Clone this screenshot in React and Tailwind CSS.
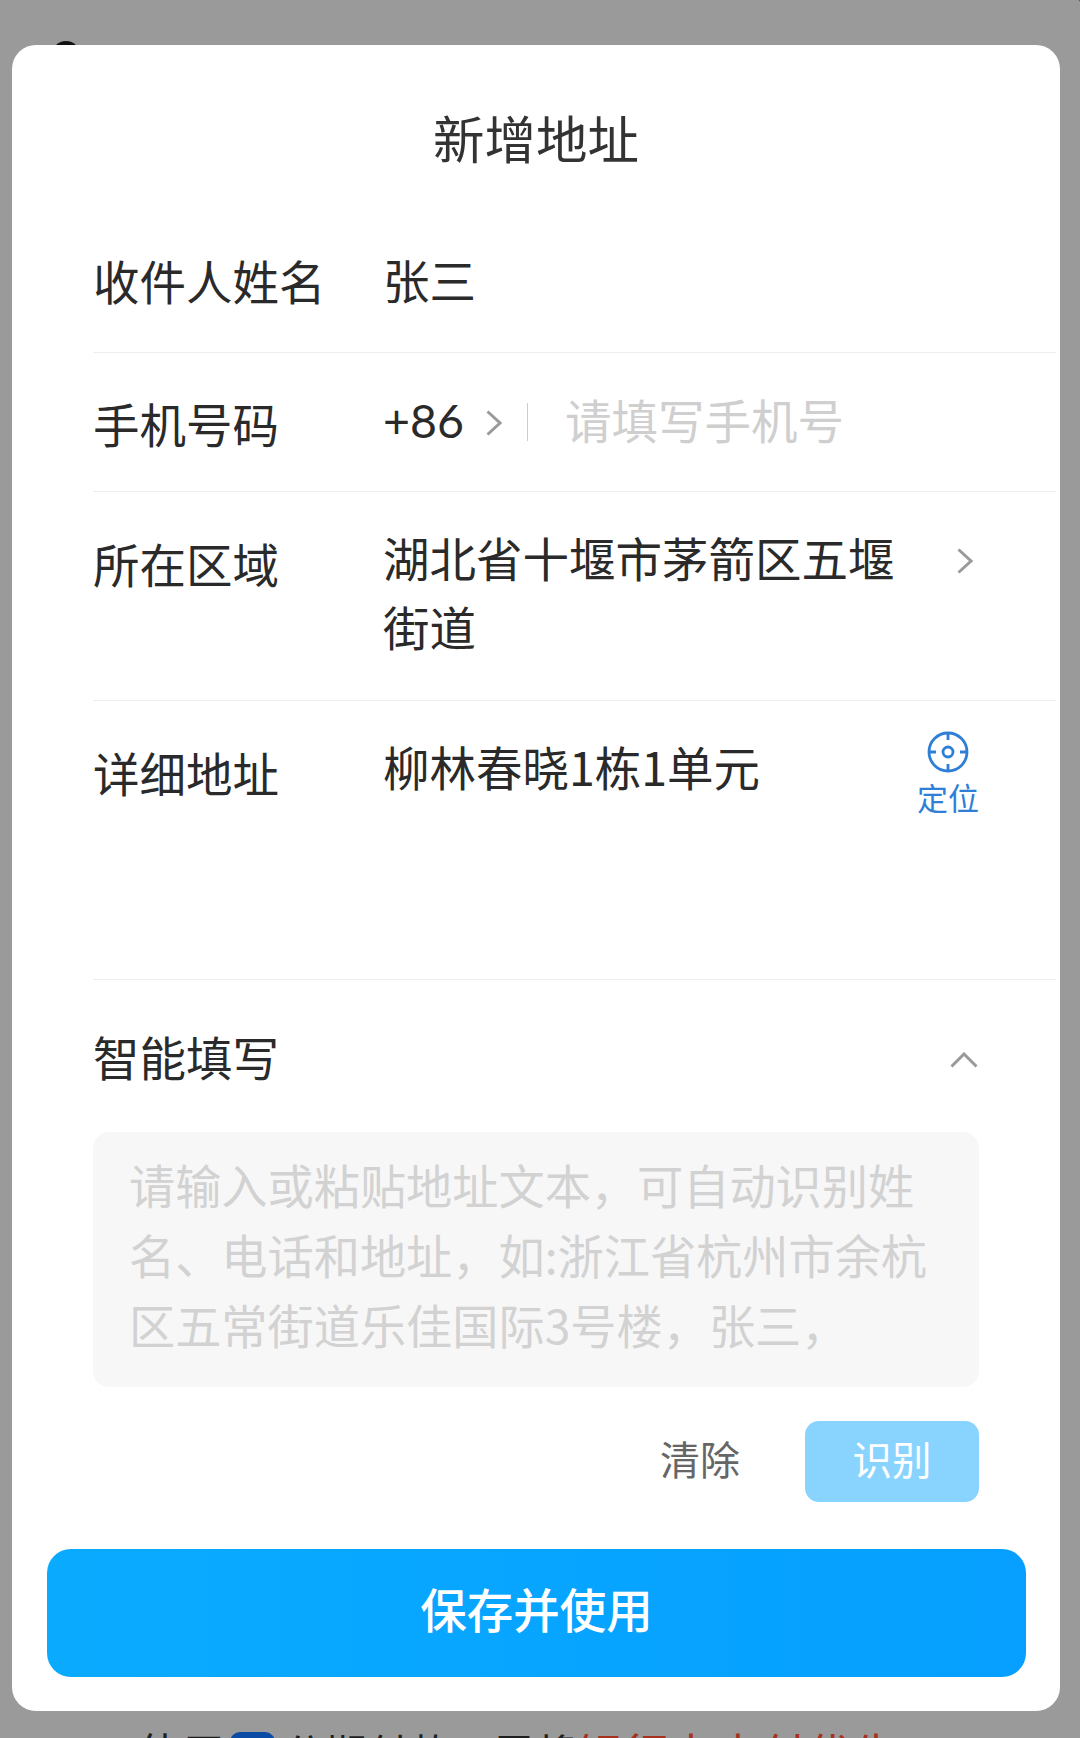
const FONT = "font-['Noto_Sans_CJK_SC','Noto_Sans',sans-serif]";

function Chevron({ className }) {
  return (
    <svg className={className} viewBox="0 0 16 26" fill="none" stroke="#9a9a9a" strokeWidth="3">
      <path d="M1.5 1.5 L14 13 L1.5 24.5" />
    </svg>
  );
}

export default function App() {
  return (
    <div className={`${FONT} relative h-[1738px] w-[1080px] overflow-hidden bg-[#9a9a9a]`}>
      <div className="absolute left-[52px] top-[41px] h-[28px] w-[28px] rounded-full bg-[#111]" />
      <div className="absolute right-[-30px] top-[-30px] h-[36px] w-[36px] rounded-full bg-[#555]" />

      <div className="relative ml-[12px] mt-[45px] h-[1666px] w-[1048px] rounded-[24px] bg-white pl-[81px] pr-[4px]">
        <h1 className="h-[163px] pr-[77px] pt-[62px] text-center text-[51.5px] font-normal leading-[60px] text-[#333]">新增地址</h1>

        <div className="flex h-[145px] border-b border-[#eeeeee] pt-[42px] text-[46.5px] leading-[60px] text-[#2a2a2a]">
          <span className="w-[290px]">收件人姓名</span>
          <span className="-mt-[1px]">张三</span>
        </div>

        <div className="flex h-[139px] items-start border-b border-[#eeeeee] pt-[40px] text-[46.5px] leading-[60px] text-[#2a2a2a]">
          <span className="w-[290px]">手机号码</span>
          <div className="-mt-[3px] flex items-center">
            <span className="w-[103px] font-['Lato','Noto_Sans',sans-serif]">+86</span>
            <Chevron className="mt-[6px] h-[26px] w-[16px]" />
            <div className="ml-[25px] mt-[3px] h-[38px] w-px bg-[#cccccc]" />
            <span className="-mt-[2px] ml-[37px] text-[#cfcfcf]">请填写手机号</span>
          </div>
        </div>

        <div className="flex h-[209px] items-start border-b border-[#eeeeee] pt-[36px] text-[46.5px] leading-[69px] text-[#2a2a2a]">
          <span className="w-[290px]">所在区域</span>
          <span className="-mt-[6px] w-[515px] whitespace-nowrap">湖北省十堰市茅箭区五堰<br />街道</span>
          <Chevron className="ml-[59px] mt-[20px] h-[26px] w-[16px]" />
        </div>

        <div className="flex h-[279px] items-start border-b border-[#eeeeee] pt-[36px] text-[46.5px] leading-[69px] text-[#2a2a2a]">
          <span className="w-[290px]">详细地址</span>
          <span className="-mt-[6px] w-[534px]">柳林春晓1栋1单元</span>
          <div className="-mt-[6px] flex w-[62px] flex-col items-center">
            <svg className="h-[42px] w-[42px]" viewBox="0 0 42 42" fill="none" stroke="#2f7fd6" strokeWidth="2.8">
              <circle cx="21" cy="21" r="19" />
              <circle cx="21" cy="21" r="5" />
              <path d="M21 2 V9 M21 33 V40 M2 21 H9 M33 21 H40" />
            </svg>
            <span className="mt-[4px] whitespace-nowrap text-[31px] leading-[40px] text-[#2f7fd6]">定位</span>
          </div>
        </div>

        <div className="flex h-[152px] items-start justify-between pr-[78px] pt-[46px] text-[46.5px] leading-[60px] text-[#2a2a2a]">
          <span>智能填写</span>
          <svg className="mt-[26px] h-[16px] w-[28px]" viewBox="0 0 28 16" fill="none" stroke="#9a9a9a" strokeWidth="3">
            <path d="M1.5 14.5 L14 2 L26.5 14.5" />
          </svg>
        </div>

        <div className="mr-[77px] h-[255px] whitespace-nowrap rounded-[16px] bg-[#f7f7f7] pl-[36px] pt-[17px] text-[46.2px] leading-[70px] text-[#d2d2d2]">
          请输入或粘贴地址文本，可自动识别姓<br />
          名、电话和地址，如:浙江省杭州市余杭<br />
          区五常街道乐佳国际3号楼，张三，
        </div>

        <div className="mr-[77px] mt-[34px] flex h-[81px] items-center justify-end">
          <span className="mb-[8px] mr-[65px] text-[40px] leading-[50px] text-[#666666]">清除</span>
          <div className="flex h-[81px] w-[174px] items-center justify-center rounded-[14px] bg-[#89d3ff] pb-[8px] text-[39.5px] leading-[50px] text-white">识别</div>
        </div>

        <div className="-ml-[46px] mt-[47px] flex h-[128px] w-[979px] items-center justify-center rounded-[24px] bg-gradient-to-r from-[#0aabff] to-[#069fff] pb-[10px] text-[46.5px] font-medium leading-[60px] text-white">保存并使用</div>
      </div>

      <div className="mt-[18px] flex whitespace-nowrap pl-[137px] text-[44px] leading-[46px] text-[#1f1f1f]">
        <span>使用</span>
        <span className="ml-[5px] mt-[3px] h-[40px] w-[45px] rounded-[10px] bg-[#0b4aa5]" />
        <span className="ml-[8px] text-[42px]">分期付款，需将</span>
        <span className="text-[46px] text-[#a8301f]">银行卡支付优先</span>
      </div>
    </div>
  );
}
